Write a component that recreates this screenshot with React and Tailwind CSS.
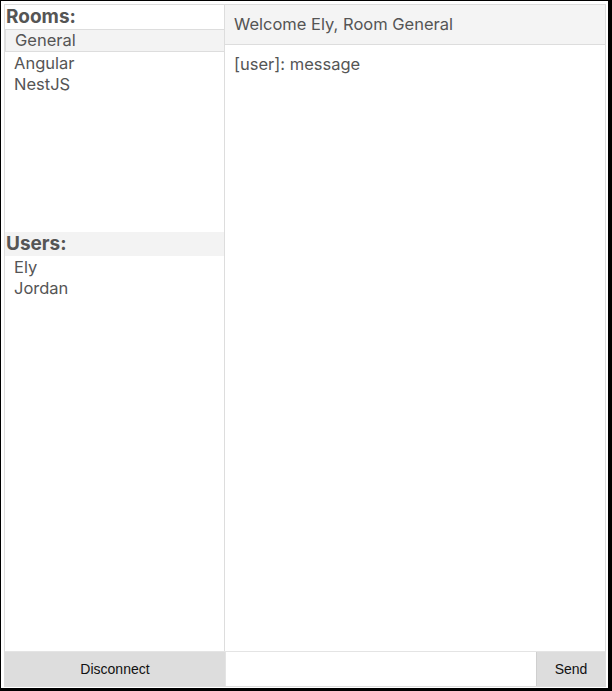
import { useState } from 'react';

const rooms = ['General', 'Angular', 'NestJS'];
const users = ['Ely', 'Jordan'];

const App = () => {
  const [room] = useState('General');
  const [text, setText] = useState('');

  return (
    <div className="w-[612px] h-[691px] bg-white border-l border-t border-r-[4px] border-b-[3px] border-black pt-[3px] pl-[3px] pr-[2px] pb-[1px] font-['Inter','Liberation_Sans',sans-serif] text-[#555]">
      <div className="h-full flex flex-col border border-[#ddd]">
        <div className="flex flex-1 min-h-0">
          {/* Sidebar */}
          <div className="w-[220px] flex flex-col border-r border-[#ddd]">
            <div className="h-[227px]">
              <h2 className="text-[19px] font-bold leading-[24px] pl-px">Rooms:</h2>
              <ul className="text-[16.5px] leading-[21px]">
                {rooms.map((r) =>
                  r === room ? (
                    <li key={r} className="bg-[#f3f3f3] border border-[#ddd] pl-[9px] -mr-px">
                      {r}
                    </li>
                  ) : (
                    <li key={r} className="pl-[9px] pt-px -mb-px">
                      {r}
                    </li>
                  )
                )}
              </ul>
            </div>
            <div className="flex-1">
              <h2 className="text-[19px] font-bold leading-[24px] pl-px bg-[#f3f3f3]">Users:</h2>
              <ul className="text-[16.5px] leading-[21px] pt-px">
                {users.map((u) => (
                  <li key={u} className="pl-[9px]">
                    {u}
                  </li>
                ))}
              </ul>
            </div>
          </div>

          {/* Chat */}
          <div className="flex-1 flex flex-col">
            <div className="h-[40px] flex items-center px-[9px] bg-[#f4f4f4] border-b border-[#ddd] text-[16.5px]">
              Welcome Ely, Room General
            </div>
            <div className="flex-1 px-[9px] pt-[9px] text-[16.5px] leading-[21px]">
              [user]: message
            </div>
          </div>
        </div>

        {/* Footer */}
        <div className="flex h-[35px] border-t border-[#e4e4e4]">
          <button className="w-[220px] bg-[#dddddd] text-[14px] text-[#111] font-['Liberation_Sans',Arial,sans-serif]">
            Disconnect
          </button>
          <input
            value={text}
            onChange={(e) => setText(e.target.value)}
            className="flex-1 min-w-0 border-l border-[#e4e4e4] bg-white outline-none px-2 text-[14px]"
          />
          <button className="w-[69px] bg-[#dddddd] border-l border-[#cfcfcf] text-[14px] text-[#111] font-['Liberation_Sans',Arial,sans-serif]">
            Send
          </button>
        </div>
      </div>
    </div>
  );
};

export default App;
